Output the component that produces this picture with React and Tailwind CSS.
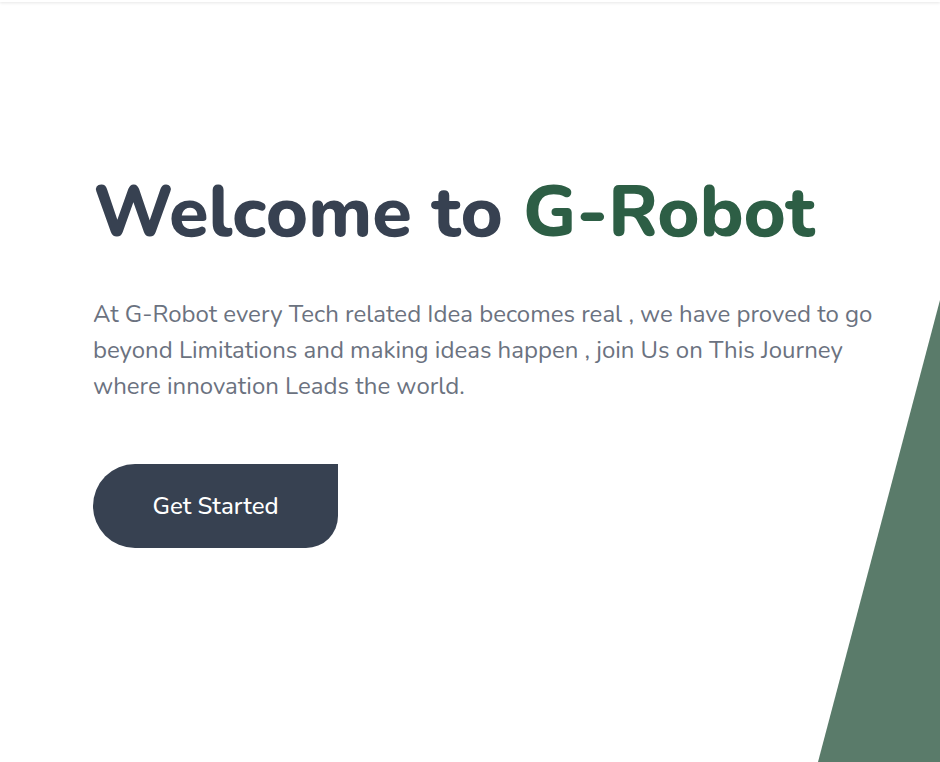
import React from 'react';

export default function App() {
    return (
        <div className="relative w-full h-[762px] overflow-hidden bg-white font-['Nunito','Lato',sans-serif]">
            {/* Header shadow */}
            <div className="h-[2px] w-full shadow-[0_1px_3px_rgba(0,0,0,0.12)]" />

            {/* Decorative slant */}
            <svg
                className="absolute right-0 bottom-0 w-[122px] h-[462px]"
                viewBox="0 0 122 462"
                preserveAspectRatio="none"
            >
                <polygon points="122,0 122,462 0,462" fill="#5a7b6a" />
            </svg>

            {/* Hero */}
            <div className="relative pl-[93px] pt-[166px]">
                <h1 className="text-[72px] font-extrabold leading-[88px] text-[#374151]">
                    Welcome to <span className="text-[#2d5e45]">G-Robot</span>
                </h1>
                <p className="mt-[40px] w-[800px] text-[24px] leading-[36px] text-[#6b7280]">
                    At G-Robot every Tech related Idea becomes real , we have proved to go
                    beyond Limitations and making ideas happen , join Us on This Journey
                    where innovation Leads the world.
                </p>
                <button className="mt-[60px] w-[245px] h-[84px] bg-[#374151] text-white text-[24px] font-medium rounded-tl-[42px] rounded-bl-[42px] rounded-br-[32px] rounded-tr-none">
                    Get Started
                </button>
            </div>
        </div>
    );
}
